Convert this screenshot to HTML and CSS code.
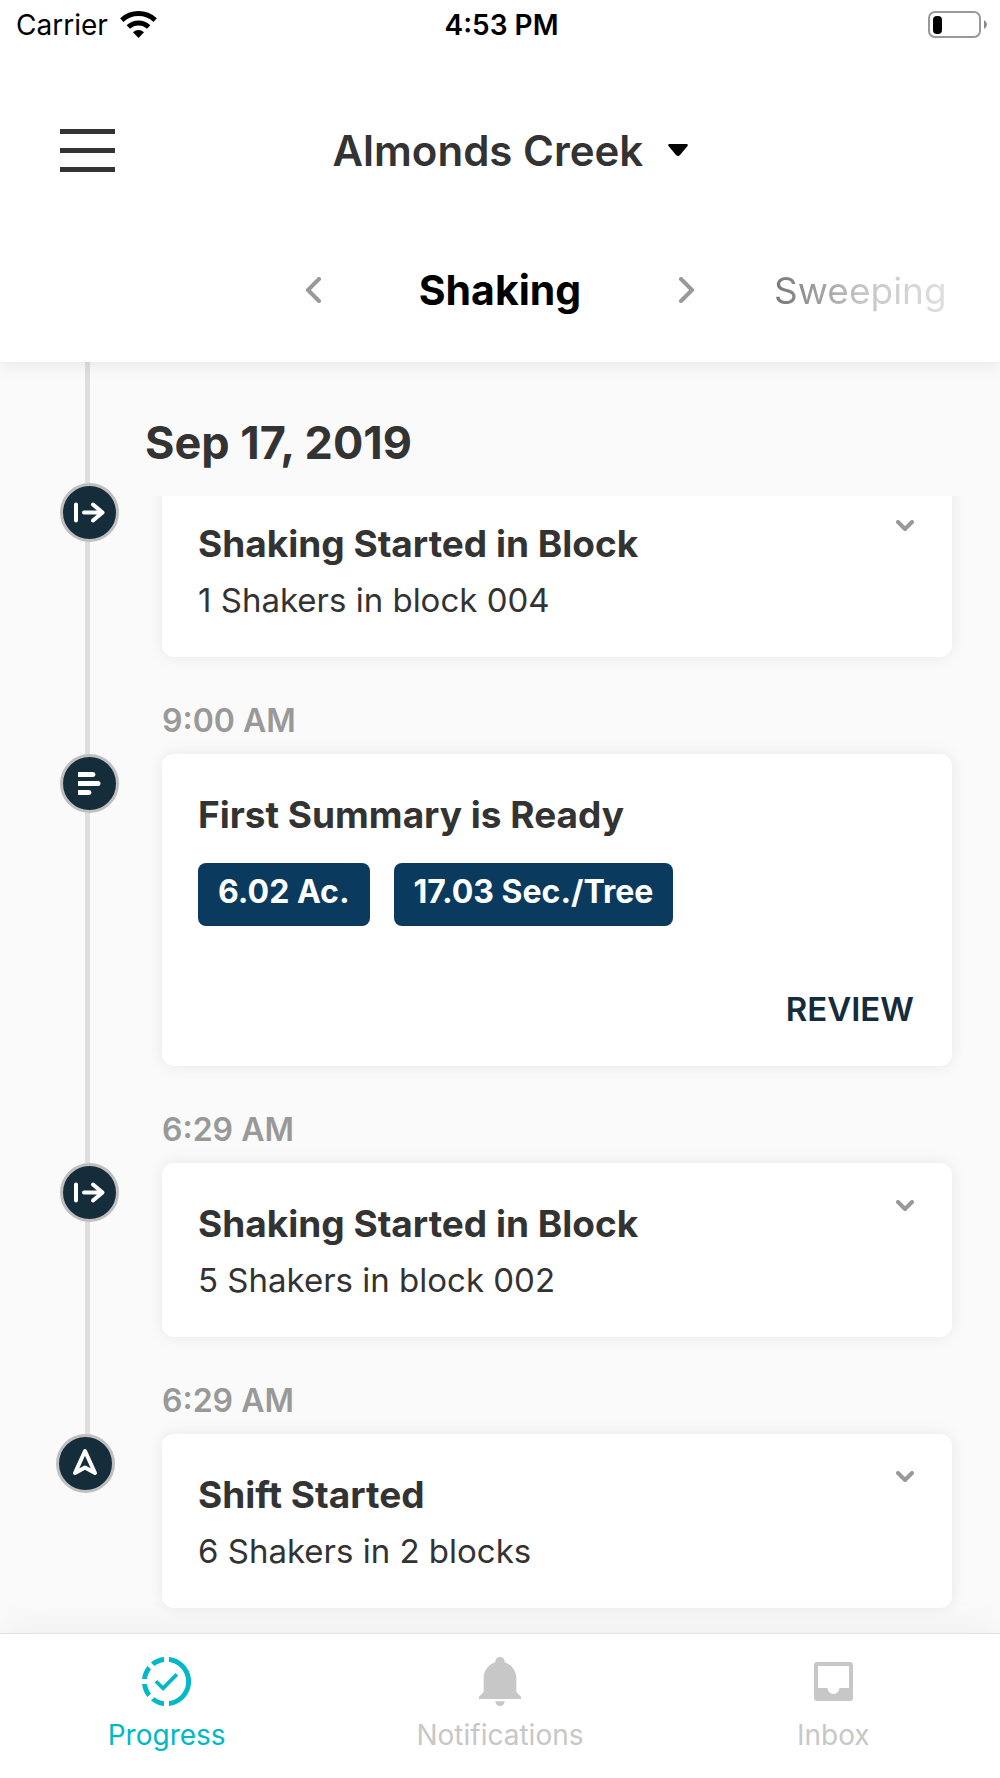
FILE: index.html
```html
<!DOCTYPE html>
<html lang="en">
<head>
  <meta charset="UTF-8" />
  <title>Almonds Creek - Shaking</title>
  <meta name="viewport" content="width=device-width, initial-scale=1.0" />
  <link rel="stylesheet" href="styles.css">
</head>
<body>
  <header class="header">
    <div class="status-bar">
      <div class="carrier">
        Carrier
        <svg width="37" height="28" viewBox="0 0 37 28" fill="none" stroke="#000" stroke-width="5">
          <path d="M1.8 9.1A24.5 24.5 0 0 1 35.2 9.1" />
          <path d="M8.3 16A15 15 0 0 1 28.7 16" />
          <path d="M13 21.2A8 8 0 0 1 24 21.2L18.5 27Z" fill="#000" stroke="none" />
        </svg>
      </div>
      <div class="clock">4:53 PM</div>
      <svg class="battery" width="59" height="28" viewBox="0 0 59 28">
        <rect x="1" y="1" width="51" height="25" rx="6" fill="none" stroke="#999" stroke-width="2" />
        <rect x="5" y="5" width="9" height="18" rx="4" fill="#000" />
        <path d="M56 9q3 2 3 4.5t-3 4.5z" fill="#888" />
      </svg>
    </div>

    <div class="title-bar">
      <button class="menu-btn" aria-label="Menu">
        <svg width="55" height="44" viewBox="0 0 55 44" fill="#333">
          <rect width="55" height="5" /><rect y="19" width="55" height="5" /><rect y="38" width="55" height="5" />
        </svg>
      </button>
      <div class="ranch">
        <select class="ranch-select" aria-label="Ranch">
          <option>Almonds Creek</option>
        </select>
        <svg width="20" height="12" viewBox="0 0 20 12"><path d="M1.5 0h17q2 0 1 2L12 11q-2 2-4 0L.5 2q-1-2 1-2z" /></svg>
      </div>
    </div>

    <nav class="stages">
      <div class="stage-current">
        <button class="arrow-btn" aria-label="Previous stage">
          <svg width="16" height="26" viewBox="0 0 16 26"><path d="M14 2L3 13l11 11" /></svg>
        </button>
        <h1>Shaking</h1>
        <button class="arrow-btn" aria-label="Next stage">
          <svg width="16" height="26" viewBox="0 0 16 26"><path d="M2 2l11 11L2 24" /></svg>
        </button>
      </div>
      <button class="stage-next">Sweeping</button>
    </nav>
  </header>

  <main class="content">
    <h2 class="date">Sep 17, 2019</h2>

    <ol class="timeline">
      <li class="event">
        <svg class="marker" viewBox="0 0 59 59">
          <circle cx="29.5" cy="29.5" r="28" />
          <path d="M16 21.5v16M24 29.5h18M33 21.5l9.5 8-9.5 8" />
        </svg>
        <article class="card">
          <div>
            <h3>Shaking Started in Block</h3>
            <p>1 Shakers in block 004</p>
          </div>
          <button class="expand-btn" aria-label="Expand">
            <svg width="18" height="12" viewBox="0 0 18 12"><path d="M2 2l7 7 7-7" /></svg>
          </button>
        </article>
      </li>

      <li class="event">
        <time>9:00 AM</time>
        <svg class="marker" viewBox="0 0 59 59">
          <circle cx="29.5" cy="29.5" r="28" />
          <path class="solid" d="M18 18h15a2.5 2.5 0 0 1 0 5H18zM18 27h20a2.5 2.5 0 0 1 0 5H18zM18 36h11a2.5 2.5 0 0 1 0 5H18z" />
        </svg>
        <article class="card card-summary">
          <h3>First Summary is Ready</h3>
          <div class="tags">
            <span class="tag">6.02 Ac.</span>
            <span class="tag">17.03 Sec./Tree</span>
          </div>
          <button class="review-btn">REVIEW</button>
        </article>
      </li>

      <li class="event">
        <time>6:29 AM</time>
        <svg class="marker" viewBox="0 0 59 59">
          <circle cx="29.5" cy="29.5" r="28" />
          <path d="M16 21.5v16M24 29.5h18M33 21.5l9.5 8-9.5 8" />
        </svg>
        <article class="card">
          <div>
            <h3>Shaking Started in Block</h3>
            <p>5 Shakers in block 002</p>
          </div>
          <button class="expand-btn" aria-label="Expand">
            <svg width="18" height="12" viewBox="0 0 18 12"><path d="M2 2l7 7 7-7" /></svg>
          </button>
        </article>
      </li>

      <li class="event event-start">
        <time>6:29 AM</time>
        <svg class="marker" viewBox="0 0 59 59">
          <circle cx="29.5" cy="29.5" r="28" />
          <path d="M29 17L39 39l-10-5.5L19 39z" />
        </svg>
        <article class="card">
          <div>
            <h3>Shift Started</h3>
            <p>6 Shakers in 2 blocks</p>
          </div>
          <button class="expand-btn" aria-label="Expand">
            <svg width="18" height="12" viewBox="0 0 18 12"><path d="M2 2l7 7 7-7" /></svg>
          </button>
        </article>
      </li>
    </ol>
  </main>

  <nav class="tabs">
    <a class="tab active" href="#progress">
      <svg width="59" height="59" viewBox="0 0 24 24" fill="currentColor">
        <path d="M13 2.03V4.05C17.39 4.59 20.5 8.58 19.96 12.97C19.5 16.61 16.64 19.5 13 19.93V21.93C18.5 21.38 22.5 16.5 21.95 11C21.5 6.25 17.73 2.5 13 2.03M11 2.06C9.05 2.25 7.19 3 5.67 4.26L7.1 5.74C8.22 4.84 9.57 4.26 11 4.06V2.06M4.26 5.67C3 7.19 2.25 9.04 2.05 11H4.05C4.24 9.58 4.8 8.23 5.69 7.1L4.26 5.67M2.06 13C2.26 14.96 3.03 16.81 4.27 18.33L5.69 16.9C4.81 15.77 4.24 14.42 4.06 13H2.06M7.1 18.37L5.67 19.74C7.18 21 9.04 21.79 11 22V20C9.58 19.82 8.23 19.25 7.1 18.37Z" />
        <path d="M7.7 11.9L10.6 14.8L16.2 9.1" fill="none" stroke="currentColor" stroke-width="1.5" />
      </svg>
      Progress
    </a>
    <a class="tab" href="#notifications">
      <svg width="56" height="59" viewBox="0 0 24 25" fill="currentColor">
        <path d="M21 19V20H3V19L5 17V11C5 7.9 7.03 5.17 10 4.29V4A2 2 0 0 1 14 4V4.29C16.97 5.17 19 7.9 19 11V17L21 19M14 21A2 2 0 0 1 10 21" />
      </svg>
      Notifications
    </a>
    <a class="tab" href="#inbox">
      <svg width="39" height="59" viewBox="0 0 39 59" fill="currentColor" fill-rule="evenodd">
        <path d="M3 10H36a3 3 0 0 1 3 3V46a3 3 0 0 1-3 3H3a3 3 0 0 1-3-3V13a3 3 0 0 1 3-3M4 14V36H13.5a6 6 0 0 0 12 0H35V14Z" />
      </svg>
      Inbox
    </a>
  </nav>
</body>
</html>
```
FILE: styles.css
```css
* {
  box-sizing: border-box;
}

body {
  font-family: Inter, 'Liberation Sans', sans-serif;
  background: #fafafa;
  color: #333;
  margin: 0;
  min-height: 100vh;
  display: flex;
  flex-direction: column;
}

h1, h2, h3, p, ol {
  margin: 0;
  padding: 0;
  font-weight: 700;
}

button, select {
  font: inherit;
  color: inherit;
  background: none;
  border: none;
  padding: 0;
  margin: 0;
  cursor: pointer;
}

svg {
  display: block;
  flex-shrink: 0;
}

/* header */
.header {
  background: white;
  box-shadow: 0 4px 16px rgba(0, 0, 0, 0.07);
  padding-bottom: 34px;
  position: relative;
  z-index: 2;
}

.status-bar {
  display: grid;
  grid-template-columns: 1fr auto 1fr;
  align-items: center;
  height: 50px;
  padding: 0 13px 0 16px;
  color: #000;
  font-size: 28px;
}

.carrier {
  display: flex;
  align-items: center;
  gap: 12px;
}

.clock {
  font-weight: 600;
}

.battery {
  justify-self: end;
}

.title-bar {
  display: grid;
  grid-template-columns: 1fr auto 1fr;
  align-items: center;
  height: 202px;
  padding: 0 40px 0 60px;
}

.menu-btn {
  justify-self: start;
}

.ranch {
  display: flex;
  align-items: center;
  gap: 24px;
  padding-bottom: 2px;
}

.ranch-select {
  appearance: none;
  font-size: 42px;
  font-weight: 600;
}

.stages {
  display: grid;
  grid-template-columns: 1fr 390px 1fr;
  align-items: center;
  height: 76px;
}

.stage-current {
  grid-column: 2;
  display: flex;
  align-items: center;
  justify-content: space-between;
}

.stage-current h1 {
  font-size: 41px;
  color: #000;
}

.arrow-btn svg,
.expand-btn svg {
  fill: none;
  stroke: #999;
  stroke-width: 4;
  stroke-linecap: round;
  stroke-linejoin: round;
}

.stage-next {
  justify-self: start;
  margin-left: 79px;
  font-size: 37px;
  background: linear-gradient(to right, #777, #c4c4c4 50%, #e0e0e0);
  background-clip: text;
  -webkit-background-clip: text;
  color: transparent;
}

/* timeline */
.content {
  flex: 1;
  background: linear-gradient(#dedede, #dedede) 85px 0 / 5px calc(100% - 150px) no-repeat;
}

/* sticks to the top, cards scroll behind it */
.date {
  position: sticky;
  top: 0;
  z-index: 1;
  margin-left: 145px;
  height: 134px;
  padding-top: 24px;
  line-height: 114px;
  background: #fafafa;
  font-size: 45px;
}

.timeline {
  list-style: none;
  margin-top: -13px;
  padding: 0 48px 24px 56px;
}

.event {
  display: grid;
  grid-template-columns: 63px 1fr;
  column-gap: 43px;
}

.event time {
  grid-column: 2;
  height: 97px;
  line-height: 40px;
  padding-top: 44px;
  font-size: 32px;
  font-weight: 600;
  color: #999;
}

.marker {
  grid-column: 1;
  justify-self: end;
  width: 59px;
  height: 59px;
  fill: none;
  stroke: white;
  stroke-width: 4;
  stroke-linecap: round;
  stroke-linejoin: round;
}

.marker circle {
  fill: #152c3a;
  stroke: #bfbfbf;
  stroke-width: 3;
}

.marker .solid {
  fill: white;
  stroke: none;
}

.event-start .marker {
  justify-self: start;
}

.card {
  grid-column: 2;
  display: flex;
  justify-content: space-between;
  align-items: flex-start;
  min-height: 174px;
  padding: 37px 38px 32px 36px;
  background: white;
  border-radius: 12px;
  box-shadow: 0 0 16px rgba(0, 0, 0, 0.08);
}

.card h3 {
  font-size: 37px;
  line-height: 48px;
}

.card p {
  margin-top: 10px;
  font-size: 33px;
  line-height: 44px;
  font-weight: 400;
}

.card-summary {
  flex-direction: column;
  min-height: 312px;
}

.tags {
  display: flex;
  gap: 24px;
  margin-top: 24px;
}

.tag {
  height: 63px;
  line-height: 58px;
  padding: 0 20px;
  border-radius: 8px;
  background: #0a3b5e;
  color: white;
  font-size: 32px;
  font-weight: 700;
}

.review-btn {
  align-self: flex-end;
  margin-top: auto;
  line-height: 50px;
  font-size: 33px;
  font-weight: 600;
  color: #152c3a;
}

/* bottom tabs */
.tabs {
  display: grid;
  grid-template-columns: repeat(3, 1fr);
  height: 145px;
  padding-top: 18px;
  background: white;
  border-top: 1px solid #e2e2e2;
  box-shadow: 0 0 40px rgba(0, 0, 0, 0.06);
  position: relative;
}

.tab {
  display: flex;
  flex-direction: column;
  align-items: center;
  gap: 6px;
  line-height: 36px;
  font-size: 28px;
  color: #c7c7c7;
  text-decoration: none;
}

.tab.active {
  color: #00b9c6;
}
```
